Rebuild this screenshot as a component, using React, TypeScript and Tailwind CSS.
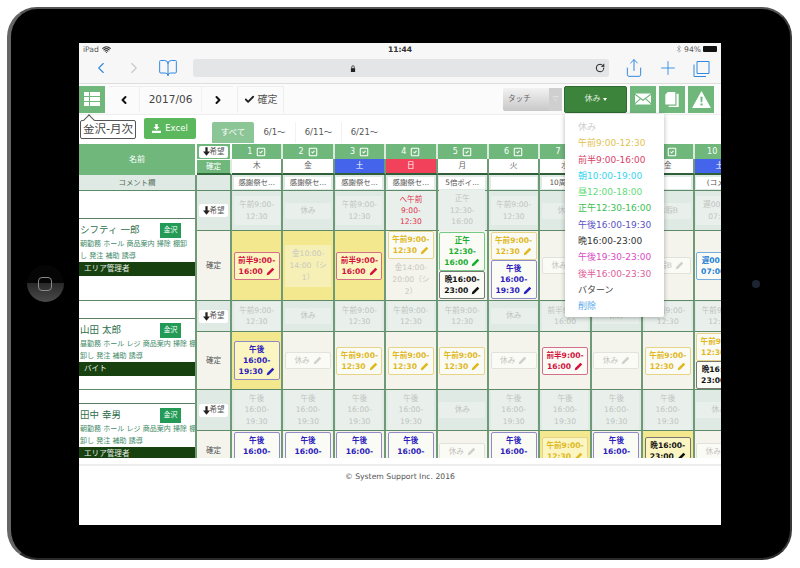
import { BookOpen, Bluetooth, Check, ChevronLeft, ChevronRight, Plus, RotateCw, Share, SquareCheck, Wifi } from 'lucide-react';

type Shift = { lines: string[]; box: string };

const shifts: Record<string, Shift> = {
  am: { lines: ['午前9:00-', '12:30'], box: 'border-[#e6d588] text-[#dfb81e]' },
  half: { lines: ['前半9:00-', '16:00'], box: 'border-[#d2708a] text-[#d2123e]' },
  pm: { lines: ['午後', '16:00-', '19:30'], box: 'border-[#8f8bc6] text-[#2a20bc]' },
  noon: { lines: ['正午', '12:30-', '16:00'], box: 'border-[#74cc84] text-[#16ae2e]' },
  night: { lines: ['晩16:00-', '23:00'], box: 'border-[#777777] text-[#111111]' },
  off: { lines: ['休み'], box: 'border-[#e2e2dc] text-[#c4c4c0] font-normal' },
  restB: { lines: ['休暇B'], box: 'border-[#e2e2dc] text-[#c4c4c0] font-normal' },
  late: { lines: ['遅00:00-', '07:00'], box: 'border-[#74aee0] text-[#1c80d8]' },
};

const weekdays = ['木', '金', '土', '日', '月', '火', '水', '木', '金', '土'];
const comments = ['感謝祭セ...', '感謝祭セ...', '感謝祭セ...', '感謝祭セ...', '5倍ポイ...', '', '10周年...', '', '', '(コメ...'];

const people = [
  {
    name: 'シフティ 一郎',
    tags: ['朝勤務 ホール 商品案内 掃除 棚卸', 'し 発注 補助 誘導'],
    role: 'エリア管理者',
    top: 'pt-[27px]',
    wish: ['am', 'off', 'am', 'red', 'noon', 'am', 'off', 'off', 'restB', 'late'],
    fixed: [['half'], ['faded1'], ['half'], ['am', 'faded2'], ['noon', 'night'], ['am', 'pm'], ['off'], ['off'], ['restB'], ['late']],
    yellow: [0, 1, 2],
  },
  {
    name: '山田 太郎',
    tags: ['昼勤務 ホール レジ 商品案内 掃除 棚', '卸し 発注 補助 誘導'],
    role: 'バイト',
    top: 'pt-[17px]',
    wish: ['am', 'off', 'am', 'am', 'am', 'off', 'half', 'off', 'am', 'am'],
    fixed: [['pm'], ['off'], ['am'], ['am'], ['am'], ['off'], ['half'], ['off'], ['am'], ['am', 'night']],
    yellow: [0],
  },
  {
    name: '田中 幸男',
    tags: ['朝勤務 ホール レジ 商品案内 掃除 棚', '卸し 発注 補助 誘導'],
    role: 'エリア管理者',
    top: 'pt-[13px]',
    wish: ['pm', 'pm', 'pm', 'pm', 'off', 'pm', 'pm', 'pm', 'pm', 'off'],
    fixed: [['pm'], ['pm'], ['pm'], ['pm'], ['off'], ['pm'], ['am'], ['pm'], ['night'], ['off']],
    yellow: [6, 8],
  },
];

const menu = [
  ['休み', 'text-[#cfcfcf]'],
  ['午前9:00-12:30', 'text-[#e3c24e]'],
  ['前半9:00-16:00', 'text-[#d8446a]'],
  ['朝10:00-19:00', 'text-[#38d6ee]'],
  ['昼12:00-18:00', 'text-[#62dc78]'],
  ['正午12:30-16:00', 'text-[#3cc052]'],
  ['午後16:00-19:30', 'text-[#5a52c4]'],
  ['晩16:00-23:00', 'text-[#333333]'],
  ['午後19:30-23:00', 'text-[#d84cc4]'],
  ['後半16:00-23:30', 'text-[#e0609c]'],
  ['バターン', 'text-[#444444]'],
  ['削除', 'text-[#5aa8ec]'],
];

function Pencil({ className }: { className: string }) {
  return (
    <svg viewBox="0 0 12 12" className={`inline-block w-[9px] h-[9px] ml-[3px] ${className}`} fill="currentColor">
      <path d="M8.6 1 11 3.4 4 10.4 1 11 1.6 8z" />
    </svg>
  );
}

function ArrowDown() {
  return (
    <svg viewBox="0 0 10 12" className="w-[7px] h-[9px]" fill="#222222">
      <path d="M3.4 0h3.2v6H10L5 12 0 6h3.4z" />
    </svg>
  );
}

function WishButton({ small }: { small?: boolean }) {
  return (
    <div className={`flex items-center justify-center w-[29px] bg-white rounded-[2px] text-[7.5px] text-[#555555] ${small ? 'h-[12px]' : 'h-[13px]'}`}>
      <ArrowDown />
      希望
    </div>
  );
}

function Chip({ kind, onYellow }: { kind: string; onYellow: boolean }) {
  const s = shifts[kind];
  const single = s.lines.length === 1;
  return (
    <div
      className={`w-[46px] shrink-0 border rounded-[2px] py-[2px] text-center font-bold text-[7.6px] leading-[11px] ${s.box} ${onYellow ? 'bg-[#fbf5c2]' : 'bg-[#fbfbf6]'}`}
    >
      {s.lines.map((line, i) => (
        <div key={i}>
          {line}
          {i === s.lines.length - 1 && <Pencil className={single ? 'text-[#d0d0cc]' : ''} />}
        </div>
      ))}
    </div>
  );
}

function Faded({ lines, className }: { lines: string[]; className: string }) {
  return (
    <div className={`w-[46px] shrink-0 py-[3px] text-center text-[7.6px] leading-[12px] text-[#c8c8c0] ${className}`}>
      {lines.map((line) => (
        <div key={line}>{line}</div>
      ))}
    </div>
  );
}

function WishCell({ kind }: { kind: string }) {
  if (kind === 'red') {
    return (
      <div className="flex items-center justify-center bg-[#e9f0ec] border-r-2 border-r-[#6f9a78] border-b border-b-[#5f8a68] text-center text-[7.6px] leading-[11px] text-[#e0304c]">
        <div>
          <div>へ午前</div>
          <div>9:00-</div>
          <div>12:30</div>
        </div>
      </div>
    );
  }
  const s = shifts[kind];
  const short = s.lines.length === 1;
  return (
    <div className="flex items-center justify-center bg-[#dfeae4] border-r-2 border-r-[#6f9a78] border-b border-b-[#5f8a68]">
      <div className={`w-[46px] text-center text-[7.6px] text-[#bfc4c0] bg-[#e9f0ec] ${short ? 'leading-[16px]' : 'leading-[11.5px] py-[3px]'}`}>
        {s.lines.map((line) => (
          <div key={line}>{line}</div>
        ))}
      </div>
    </div>
  );
}

function FixedCell({ kinds, yellow }: { kinds: string[]; yellow: boolean }) {
  return (
    <div className={`flex flex-col items-center justify-center overflow-hidden border-r-2 border-r-[#6f9a78] border-b border-b-[#5f8a68] ${yellow ? 'bg-[#f3e88e]' : 'bg-[#f4f4ec]'}`}>
      {kinds.map((k) =>
        k === 'faded1' ? (
          <Faded key={k} lines={['金10:00-', '14:00（シ', '1）']} className="bg-[#f6f0b6]" />
        ) : k === 'faded2' ? (
          <Faded key={k} lines={['金14:00-', '20:00（シ', '2）']} className="" />
        ) : (
          <Chip key={k} kind={k} onYellow={yellow} />
        ),
      )}
    </div>
  );
}

function NameCell({ p }: { p: (typeof people)[number] }) {
  return (
    <div className={`row-span-2 bg-white border-r-2 border-r-[#6f9a78] border-b border-b-[#5f8a68] overflow-hidden ${p.top}`}>
      <div className="border-t border-[#5f7f64]">
        <div className="flex items-center justify-between h-[20px] pl-[1px] pr-[14px] pt-[2px]">
          <span className="text-[9.5px] text-[#2f6f4c]">{p.name}</span>
          <span className="flex items-center justify-center w-[21px] h-[15px] bg-[#239b56] text-white text-[7px]">金沢</span>
        </div>
        <div className="h-[23px] px-[1px] text-[7px] leading-[11.5px] text-[#3f8a68] whitespace-nowrap">
          {p.tags.map((line) => (
            <div key={line}>{line}</div>
          ))}
        </div>
        <div className="flex items-center h-[14px] pl-[5px] bg-[#17420f] text-[7.6px] text-[#e8efe6]">{p.role}</div>
      </div>
    </div>
  );
}

function Table() {
  return (
    <div className="h-[314px] overflow-hidden shrink-0">
      <div className="grid w-[672px] grid-cols-[118px_35px_repeat(10,51.4px)] grid-rows-[15px_16px_16px_40px_70px_31px_58px_41px_41px]">
        <div className="row-span-2 flex items-center justify-center bg-[#70b77c] border-r-2 border-white text-[8px] text-white">名前</div>
        <div className="flex items-center justify-center bg-[#70b77c] border-r-2 border-white">
          <WishButton small />
        </div>
        {weekdays.map((_, i) => (
          <div key={i} className="flex items-center justify-center gap-[4px] bg-[#70b77c] border-r-2 border-[#dcebdf] text-[8px] text-white">
            {i + 1}
            <SquareCheck className="w-[10px] h-[10px]" strokeWidth={2.5} />
          </div>
        ))}
        <div className="flex items-center justify-center bg-[#70b77c] border-r-2 border-[#dcebdf] border-t border-t-white border-b-2 border-b-[#2f6b3a] text-[7.6px] text-white">確定</div>
        {weekdays.map((d, i) => (
          <div
            key={i}
            className={`flex items-center justify-center border-r-2 border-r-[#6f9a78] border-b-2 border-b-[#2f5f38] text-[7.6px] ${d === '土' ? 'bg-[#4464ec] text-white' : d === '日' ? 'bg-[#f2415a] text-white' : 'bg-white text-[#666666]'}`}
          >
            {d}
          </div>
        ))}
        <div className="flex items-center justify-center bg-[#dfeae4] border-r-2 border-r-[#6f9a78] border-b border-b-[#5f8a68] text-[7.4px] text-[#55705e]">コメント欄</div>
        <div className="bg-[#dfeae4] border-r-2 border-r-[#6f9a78] border-b border-b-[#5f8a68]" />
        {comments.map((c, i) => (
          <div key={i} className="flex items-center justify-center bg-[#dfeae4] border-r-2 border-r-[#6f9a78] border-b border-b-[#5f8a68]">
            <div className="w-[46px] h-[12px] bg-white text-center text-[7.4px] leading-[12px] text-[#555555] overflow-hidden whitespace-nowrap">{c}</div>
          </div>
        ))}
        {people.map((p) => (
          <div key={p.name} className="contents">
            <NameCell p={p} />
            <div className="flex items-center justify-center bg-[#dfeae4] border-r-2 border-r-[#6f9a78] border-b border-b-[#5f8a68]">
              <WishButton />
            </div>
            {p.wish.map((w, i) => (
              <WishCell key={i} kind={w} />
            ))}
            <div className="flex items-center justify-center bg-[#f4f4ec] border-r-2 border-r-[#6f9a78] border-b border-b-[#5f8a68] text-[7.6px] text-[#555555]">確定</div>
            {p.fixed.map((kinds, i) => (
              <FixedCell key={i} kinds={kinds} yellow={p.yellow.includes(i)} />
            ))}
          </div>
        ))}
      </div>
    </div>
  );
}

function Toolbar() {
  return (
    <div className="flex items-center h-[31px] shrink-0 bg-[#fbfbfb] border-b border-[#eeeeee]">
      <div className="flex flex-col justify-center gap-[1px] w-[26px] h-[27px] px-[5px] bg-[#70b77c]">
        {[0, 1, 2].map((i) => (
          <div key={i} className="flex gap-[1px] h-[4px]">
            <div className="w-[5px] bg-white" />
            <div className="flex-1 bg-white" />
          </div>
        ))}
      </div>
      <div className="flex items-center h-[26px] ml-[4px] border-t border-[#eeeeee] text-[10.5px] text-[#444444]">
        <div className="flex items-center justify-center w-[31px] h-full border-r border-[#f0f0f0]">
          <ChevronLeft className="w-[12px] h-[12px] text-[#111111]" strokeWidth={4} />
        </div>
        <div className="flex items-center justify-center w-[62px] h-full border-r border-[#f0f0f0]">2017/06</div>
        <div className="flex items-center justify-center w-[31px] h-full">
          <ChevronRight className="w-[12px] h-[12px] text-[#111111]" strokeWidth={4} />
        </div>
      </div>
      <div className="flex items-center justify-center gap-[3px] w-[47px] h-[27px] ml-[4px] border-t border-x border-[#eeeeee] text-[10px] text-[#555555]">
        <Check className="w-[11px] h-[11px] text-[#222222]" strokeWidth={4} />
        確定
      </div>
      <div className="flex items-center w-[59px] h-[23px] ml-[219px] rounded-[2px] bg-gradient-to-b from-[#f2f2f2] to-[#c8c8c8] text-[7.6px] text-[#666666]">
        <span className="flex-1 pl-[5px]">タッチ</span>
        <span className="flex items-center justify-center w-[13px] h-full bg-[#cfcfcf] text-[#eeeeee] text-[7px]">▽</span>
      </div>
      <div className="flex items-center justify-center gap-[2px] w-[63px] h-[27px] ml-[2px] rounded-[2px] bg-[#3c843c] border border-[#2f6b2f] text-[8px] text-[#dfeadf]">
        休み
        <span className="w-0 h-0 border-x-[2.5px] border-x-transparent border-t-[3px] border-t-white" />
      </div>
      <div className="flex items-center justify-center w-[26px] h-[27px] ml-[3px] bg-[#70b77c]">
        <svg viewBox="0 0 20 14" className="w-[16px] h-[12px]" fill="white">
          <path d="M0 0h20L10 7.5zM0 2l6 4.5L0 12zM20 2l-6 4.5 6 5.5zM7 7.4l3 2.2 3-2.2 7 6.6H0z" />
        </svg>
      </div>
      <div className="flex items-center justify-center w-[26px] h-[27px] ml-[3px] bg-[#70b77c]">
        <svg viewBox="0 0 16 18" className="w-[14px] h-[15px]" fill="white">
          <path d="M3 0h9v15H0V3z" />
          <path d="M13.4 2H16v16H4v-1.6h9.4z" />
        </svg>
      </div>
      <div className="flex items-center justify-center w-[26px] h-[27px] ml-[3px] bg-[#70b77c]">
        <svg viewBox="0 0 20 18" className="w-[19px] h-[17px]">
          <path d="M10 0 20 18H0z" fill="white" />
          <path d="M8.8 6h2.4l-.4 6H9.2zM8.9 13.2h2.2v2.2H8.9z" fill="#70b77c" />
        </svg>
      </div>
    </div>
  );
}

function SubBar() {
  return (
    <div className="flex items-start h-[29px] shrink-0 bg-white">
      <div className="relative mt-[5px] ml-[1px] flex items-center justify-center w-[56px] h-[19px] border border-[#555555] rounded-[2px] text-[11.5px] text-[#444444] whitespace-nowrap">
        金沢-月次
        <span className="absolute -top-[5px] left-[4px] w-[8px] h-[8px] rotate-45 border-l border-t border-[#555555] bg-white" />
      </div>
      <div className="flex items-center justify-center gap-[4px] w-[52px] h-[21px] mt-[3px] ml-[8px] rounded-[2px] bg-[#5cb85c] text-[8.5px] text-white">
        <svg viewBox="0 0 12 12" className="w-[9px] h-[9px]" fill="white">
          <path d="M4.4 0h3.2v4H10L6 8 2 4h2.4zM0 9h12v3H0z" />
        </svg>
        Excel
      </div>
      <div className="flex items-center justify-center w-[42px] h-[21px] mt-[7px] ml-[16px] rounded-t-[2px] bg-[#8cc596] text-[8.5px] text-white">すべて</div>
      <div className="flex h-[21px] mt-[7px] text-[8.5px] text-[#555555]">
        <span className="flex items-center justify-center w-[41px]">6/1〜</span>
        <span className="flex items-center justify-center w-[46px] border-l border-[#f2f2f2]">6/11〜</span>
        <span className="flex items-center justify-center w-[46px] border-l border-[#f2f2f2]">6/21〜</span>
      </div>
    </div>
  );
}

function SafariChrome() {
  return (
    <div className="shrink-0 bg-[#f7f7f7] border-b border-[#dddddd]">
      <div className="grid grid-cols-3 items-center h-[13px] px-[4px] text-[7.6px] text-[#555555]">
        <div className="flex items-center gap-[3px]">
          iPad
          <Wifi className="w-[9px] h-[9px] text-[#333333]" strokeWidth={3} />
        </div>
        <div className="font-bold text-center text-[#333333]">11:44</div>
        <div className="flex items-center justify-end gap-[1px]">
          <Bluetooth className="w-[8px] h-[8px] text-[#999999]" />
          94%
          <span className="w-[14px] h-[6px] ml-[1px] bg-[#111111] rounded-[1px]" />
        </div>
      </div>
      <div className="flex items-center h-[27px] pb-[3px]">
        <ChevronLeft className="w-[18px] h-[18px] ml-[13px] text-[#2f8ae0]" strokeWidth={1.5} />
        <ChevronRight className="w-[18px] h-[18px] ml-[15px] text-[#c8c8c8]" strokeWidth={1.5} />
        <BookOpen className="w-[20px] h-[20px] ml-[15px] text-[#2f8ae0]" strokeWidth={1.2} />
        <div className="flex items-center w-[416px] h-[18px] ml-[15px] pl-[157px] pr-[4px] rounded-[3px] bg-[#e4e5e6]">
          <svg viewBox="0 0 8 10" className="w-[6px] h-[7px]">
            <path d="M1 4.5h6V10H1z" fill="#222222" />
            <path d="M2.2 4.5V2.8a1.8 1.8 0 0 1 3.6 0v1.7" fill="none" stroke="#222222" />
          </svg>
          <RotateCw className="w-[10px] h-[10px] ml-auto text-[#222222]" strokeWidth={2.4} />
        </div>
        <Share className="w-[20px] h-[20px] ml-[15px] text-[#2f8ae0]" strokeWidth={1.2} />
        <Plus className="w-[22px] h-[22px] ml-[13px] text-[#2f8ae0]" strokeWidth={1} />
        <svg viewBox="0 0 17 17" className="w-[17px] h-[17px] ml-[14px]" fill="none" stroke="#2f8ae0">
          <path d="M4 1.5h12v12H4zM1 4.5v12h12" />
        </svg>
      </div>
    </div>
  );
}

function Dropdown() {
  return (
    <div className="absolute left-[486px] top-[71px] w-[99px] h-[203px] pt-[5px] pl-[13px] bg-white rounded-b-[2px] shadow-[0_1px_5px_rgba(0,0,0,0.3)]">
      {menu.map(([label, color]) => (
        <div key={label} className={`h-[16.3px] text-[9px] leading-[16.3px] whitespace-nowrap ${color}`}>
          {label}
        </div>
      ))}
    </div>
  );
}

export default function App() {
  return (
    <div className="w-[800px] h-[568px] bg-white pl-[7px] pt-[7px] font-['DejaVu_Sans','Noto_Sans_CJK_JP',sans-serif]">
      <div className="flex w-[785px] h-[553px] rounded-[30px] bg-black border-t-2 border-r-2 border-b-2 border-l-4 border-t-[#555555] border-r-[#3a3a3a] border-b-[#2a2a2a] border-l-[#666666]">
        <div className="flex items-center justify-center w-[68px] shrink-0">
          <div className="flex items-center justify-center w-[37px] h-[37px] rounded-full bg-gradient-to-b from-[#050505] from-50% via-[#2a2a2a] via-50% to-[#4a4a4a]">
            <div className="w-[14px] h-[14px] rounded-[4px] border border-[#8a8a8a]" />
          </div>
        </div>
        <div className="relative flex flex-col w-[642px] h-[482px] mt-[34px] bg-white overflow-hidden">
          <SafariChrome />
          <Toolbar />
          <SubBar />
          <Table />
          <div className="flex-1 mt-[6px] pt-[5px] border-t-2 border-[#eeeeee] text-center text-[7.7px] text-[#555555]">© System Support Inc. 2016</div>
          <Dropdown />
        </div>
        <div className="flex flex-1 items-center justify-center">
          <div className="w-[8px] h-[8px] rounded-full bg-[#1c2430]" />
        </div>
      </div>
    </div>
  );
}
